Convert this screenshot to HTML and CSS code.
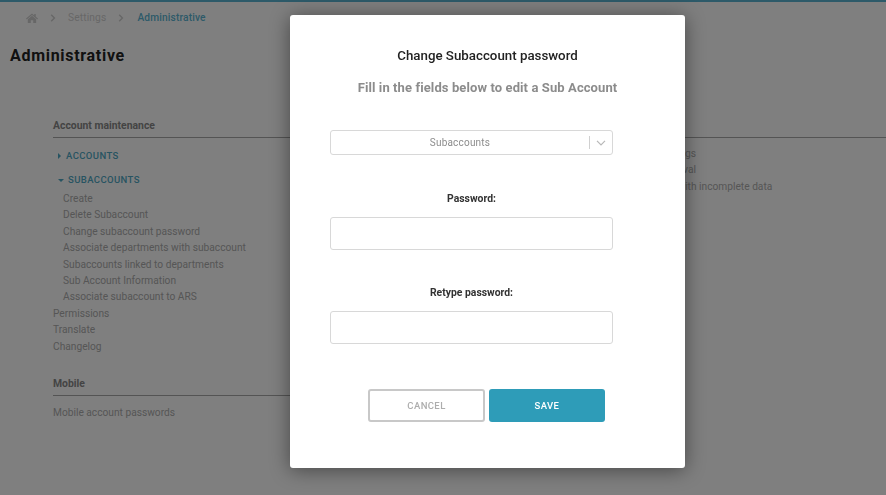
FILE: index.html
```html
<!DOCTYPE html>
<html lang="en">
<head>
    <meta charset="UTF-8">
    <meta name="viewport" content="width=device-width, initial-scale=1.0">
    <title>Administrative</title>
    <link rel="stylesheet" href="styles.css">
</head>
<body>
    <div class="page">
        <nav class="breadcrumb">
            <svg class="home-icon" viewBox="0 0 24 20"><path d="M12 1 L16.5 4.8 V2 H19.5 V7.4 L24 11.2 L22.6 12.8 L12 3.9 L1.4 12.8 L0 11.2 Z M3.6 12.6 L12 5.6 L20.4 12.6 V20 H14.4 V14.4 H9.6 V20 H3.6 Z"/></svg>
            <svg class="crumb-sep" viewBox="0 0 6 8"><path d="M1.2 .8 L4.4 4 L1.2 7.2" /></svg>
            <span class="crumb">Settings</span>
            <svg class="crumb-sep" viewBox="0 0 6 8"><path d="M1.2 .8 L4.4 4 L1.2 7.2" /></svg>
            <span class="crumb crumb-active">Administrative</span>
        </nav>

        <h1 class="page-title">Administrative</h1>

        <div class="columns">
            <div class="column">
                <h2 class="section-title">Account maintenance</h2>
                <div class="toggle toggle-accounts"><span class="arrow-right"></span>ACCOUNTS</div>
                <div class="toggle toggle-sub"><span class="arrow-down"></span>SUBACCOUNTS</div>
                <ul class="links sub-links">
                    <li>Create</li>
                    <li>Delete Subaccount</li>
                    <li>Change subaccount password</li>
                    <li>Associate departments with subaccount</li>
                    <li>Subaccounts linked to departments</li>
                    <li>Sub Account Information</li>
                    <li>Associate subaccount to ARS</li>
                </ul>
                <ul class="links">
                    <li>Permissions</li>
                    <li>Translate</li>
                    <li>Changelog</li>
                </ul>
                <h2 class="section-title section-mobile">Mobile</h2>
                <ul class="links mobile-links">
                    <li>Mobile account passwords</li>
                </ul>
            </div>
            <div class="column column-right">
                <h2 class="section-title">&nbsp;</h2>
                <ul class="links right-links">
                    <li>Login settings</li>
                    <li>Login removal</li>
                    <li>Accounts with incomplete data</li>
                </ul>
            </div>
        </div>
    </div>

    <div class="overlay"></div>

    <div class="modal">
        <h3 class="modal-title">Change Subaccount password</h3>
        <p class="modal-subtitle">Fill in the fields below to edit a Sub Account</p>
        <form class="modal-form">
            <div class="select-box">
                <span class="select-value">Subaccounts</span>
                <span class="select-divider"></span>
                <svg class="select-arrow" viewBox="0 0 10 6"><path d="M1 .8 L5 4.8 L9 .8"/></svg>
            </div>
            <label class="field-label label-password">Password:</label>
            <input class="field-input" type="password">
            <label class="field-label label-retype">Retype password:</label>
            <input class="field-input" type="password">
        </form>
        <div class="modal-buttons">
            <button class="cancel-button" type="button">CANCEL</button>
            <button class="save-button" type="button">SAVE</button>
        </div>
    </div>
</body>
</html>
```

FILE: styles.css
```css
html, body {
    margin: 0;
    height: 100%;
}
body {
    font-family: Roboto, "Liberation Sans", sans-serif;
    background-color: white;
    overflow: hidden;
}
.page {
    border-top: 2px solid #5ab4d2;
    height: 493px;
}
.breadcrumb {
    display: flex;
    align-items: center;
    height: 31px;
    padding-left: 26px;
    font-size: 10.2px;
    letter-spacing: .15px;
}
.home-icon {
    width: 12px;
    height: 10px;
    fill: #cfcfcf;
}
.crumb-sep {
    width: 6px;
    height: 8px;
    margin: 0 12px;
    fill: none;
    stroke: #cfcfcf;
    stroke-width: 1.5;
}
.crumb {
    color: #cfcfcf;
}
.crumb-active {
    margin-left: 1px;
    color: #5ab4d2;
    font-weight: 500;
}
.page-title {
    margin: 13px 0 0 10px;
    font-size: 16px;
    line-height: 20px;
    font-weight: 700;
    letter-spacing: .7px;
    color: #222;
}
.columns {
    display: grid;
    grid-template-columns: 579px 1fr;
    margin-top: 53px;
    padding-left: 53px;
}
.section-title {
    margin: 0;
    padding-bottom: 4px;
    border-bottom: 1px solid #a8a8a8;
    font-size: 10.4px;
    line-height: 14px;
    font-weight: 700;
    color: #888;
}
.toggle {
    display: flex;
    align-items: center;
    font-size: 9.5px;
    line-height: 12px;
    font-weight: 500;
    letter-spacing: .4px;
    color: #4fa8c4;
}
.toggle-accounts {
    margin: 12px 0 0 5px;
}
.toggle-sub {
    margin: 12px 0 0 5px;
}
.arrow-right {
    width: 0;
    height: 0;
    margin-right: 5px;
    border-left: 3px solid #4fa8c4;
    border-top: 3px solid transparent;
    border-bottom: 3px solid transparent;
}
.arrow-down {
    width: 0;
    height: 0;
    margin-right: 4px;
    border-top: 3px solid #4fa8c4;
    border-left: 3px solid transparent;
    border-right: 3px solid transparent;
}
.links {
    margin: 0;
    padding: 0;
    list-style: none;
    font-size: 10.2px;
    line-height: 16.4px;
    color: #acacac;
}
.sub-links {
    margin-top: 5px;
    padding-left: 10px;
}
.section-mobile {
    margin-top: 22px;
}
.mobile-links {
    margin-top: 9px;
}
.right-links {
    margin-top: 8px;
}
.overlay {
    position: fixed;
    inset: 0;
    background-color: rgba(0,0,0,0.5);
}
.modal {
    position: absolute;
    left: 290px;
    top: 15px;
    width: 395px;
    height: 453px;
    background-color: white;
    border-radius: 3px;
    box-shadow: 0 2px 20px rgba(0,0,0,0.45);
}
.modal-title {
    margin: 32px 0 0;
    text-align: center;
    font-size: 13.3px;
    line-height: 18px;
    font-weight: 500;
    color: #222;
}
.modal-subtitle {
    margin: 15px 0 0;
    text-align: center;
    font-size: 13px;
    line-height: 16px;
    font-weight: 700;
    letter-spacing: .1px;
    color: #8c8c8c;
}
.modal-form {
    width: 283px;
    margin: 34px 0 0 40px;
}
.select-box {
    display: flex;
    align-items: center;
    box-sizing: border-box;
    height: 25px;
    border: 1px solid #d8d8d8;
    border-radius: 3px;
}
.select-value {
    flex: 1;
    text-align: center;
    font-size: 10px;
    letter-spacing: .2px;
    color: #8c8c8c;
}
.select-divider {
    width: 1px;
    height: 13px;
    background-color: #d0d0d0;
}
.select-arrow {
    width: 10px;
    height: 6px;
    margin: 0 6px;
    fill: none;
    stroke: #b8b8b8;
    stroke-width: 1.2;
}
.field-label {
    display: block;
    text-align: center;
    font-size: 10.4px;
    line-height: 14px;
    font-weight: 700;
    color: #333;
}
.label-password {
    margin-top: 37px;
}
.label-retype {
    margin-top: 36px;
}
.field-input {
    display: block;
    box-sizing: border-box;
    width: 100%;
    height: 33px;
    margin-top: 11px;
    padding: 0 8px;
    border: 1px solid #d8d8d8;
    border-radius: 3px;
    background-color: white;
}
.modal-buttons {
    display: flex;
    gap: 4px;
    margin: 45px 0 0 78px;
}
.modal-buttons button {
    height: 33px;
    font-family: inherit;
    font-size: 9.5px;
    font-weight: 500;
    letter-spacing: .4px;
    border-radius: 3px;
}
.cancel-button {
    width: 117px;
    background-color: white;
    border: 2px solid #c8c8c8;
    color: #adadad;
}
.save-button {
    width: 116px;
    background-color: #2e9cb8;
    border: none;
    color: white;
}
```
